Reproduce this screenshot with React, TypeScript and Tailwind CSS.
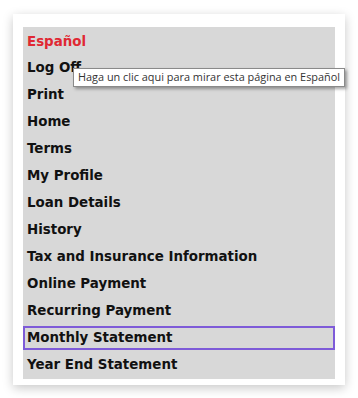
export default function App() {
  const items = [
    'Log Off',
    'Print',
    'Home',
    'Terms',
    'My Profile',
    'Loan Details',
    'History',
    'Tax and Insurance Information',
    'Online Payment',
    'Recurring Payment',
    'Monthly Statement',
    'Year End Statement',
  ]

  return (
    <div className="w-[358px] h-[398px] bg-white pl-[13px] pt-[14px]">
      <div className="relative w-[332px] bg-white px-[10px] pt-[13px] pb-[6px] shadow-[0_3px_10px_rgba(0,0,0,0.22)]">
        <ul className="bg-[#d8d8d8] pt-[2px] font-['DejaVu_Sans',Verdana,sans-serif] text-[13.4px] font-bold">
          <li className="h-[26px] flex items-center pl-[4px] text-[#e02833]">Español</li>
          {items.map((label) => (
            <li
              key={label}
              className={`flex items-center text-[#111] ${
                label === 'Monthly Statement'
                  ? 'border-2 border-[#7e5bd8] pl-[2px] h-[24px] mt-px mb-[2px]'
                  : 'h-[27px] pl-[4px]'
              }`}
            >
              {label}
            </li>
          ))}
        </ul>

        {/* Tooltip */}
        <div className="absolute left-[60px] top-[54px] h-[19px] flex items-center px-[4px] bg-white border border-[#8a8a8a] shadow-[2px_2px_3px_rgba(0,0,0,0.35)] font-['Open_Sans',sans-serif] text-[10.9px] text-[#333] whitespace-nowrap">
          Haga un clic aqui para mirar esta página en Español
        </div>
      </div>
    </div>
  )
}
